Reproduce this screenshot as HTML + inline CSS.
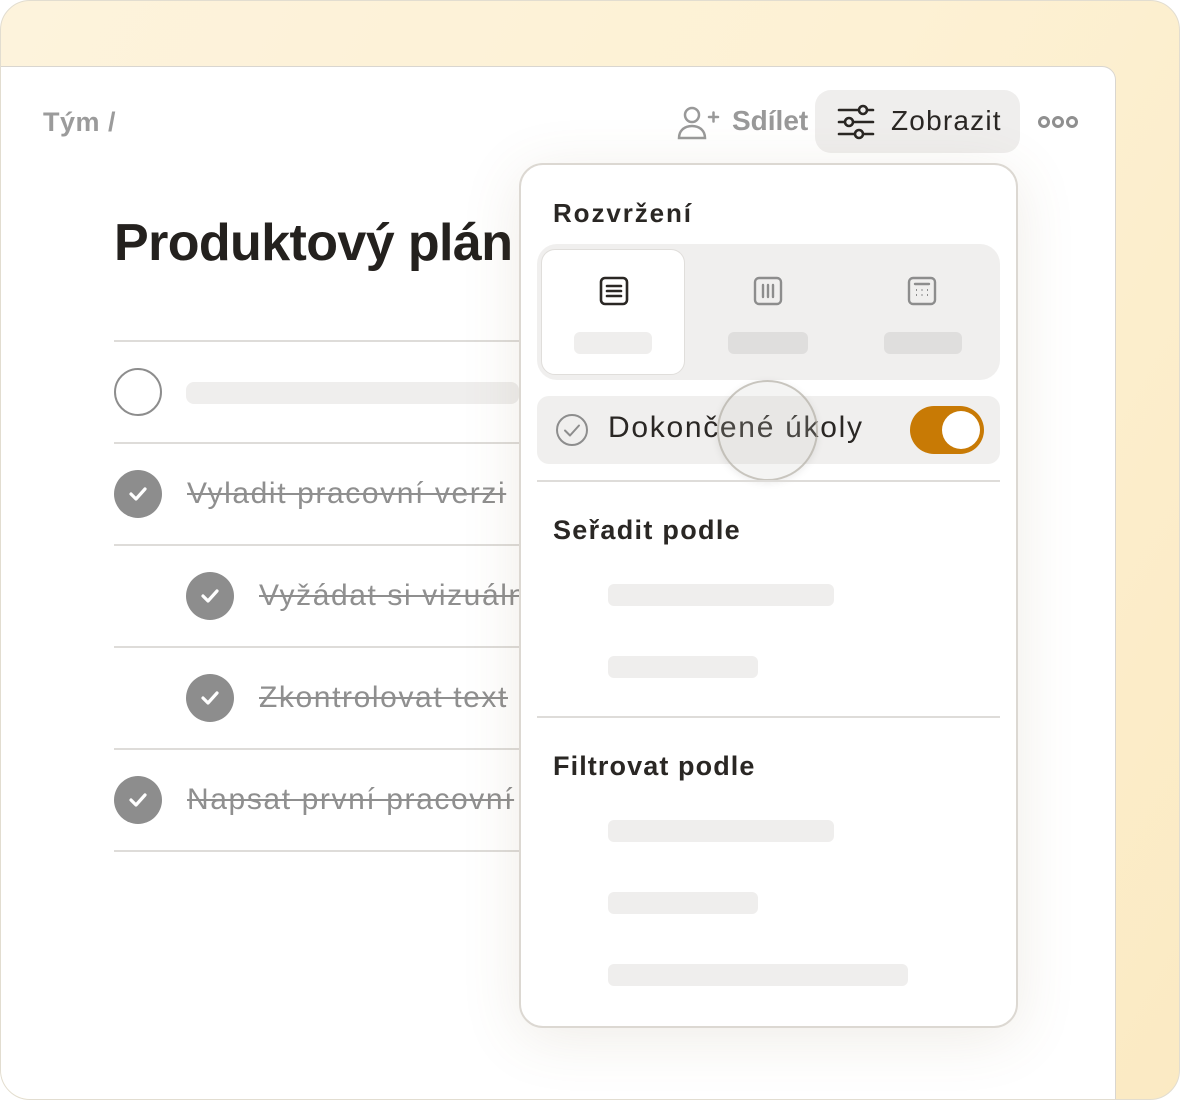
<!DOCTYPE html>
<html><head><meta charset="utf-8"><style>
*{margin:0;padding:0;box-sizing:border-box}
body{width:1180px;height:1100px;overflow:hidden;background:#fff;font-family:"Liberation Sans",sans-serif;position:relative}
.outer{position:absolute;left:0;top:0;width:1180px;height:1100px;border-radius:30px;border:1px solid #e2ddd0;background:linear-gradient(120deg,#fdf3dc 0%,#fdf1d4 50%,#fbeac3 100%);overflow:hidden}
.panel{position:absolute;left:-2px;top:65px;width:1117px;height:1040px;background:#fff;border:1px solid #d9d6d0;border-top-right-radius:14px}
.abs{position:absolute;white-space:nowrap}
.line{position:absolute;left:114px;width:405px;height:2px;background:#dedcd9}
.chk{position:absolute;width:48px;height:48px;border-radius:50%;background:#8d8d8d}
.chk svg{position:absolute;left:13px;top:14px}
.tt{position:absolute;font-size:30px;color:#8f8f8f;text-decoration:line-through;text-decoration-thickness:1.5px;white-space:nowrap;line-height:36px;letter-spacing:1.6px}
.pop{position:absolute;left:519px;top:163px;width:499px;height:865px;background:#fff;border:2px solid #dcd8d2;border-radius:24px;box-shadow:0 10px 60px rgba(120,100,60,.12)}
.h{position:absolute;font-size:27px;font-weight:bold;color:#2a2724;line-height:32px;letter-spacing:1.2px}
.bar{position:absolute;height:22px;background:#efeeed;border-radius:6px}
</style></head><body>
<div class="outer">
<div class="panel"></div>
</div>
<div class="abs" style="left:43px;top:106px;font-size:27px;font-weight:bold;color:#9b9b9b;line-height:32px;letter-spacing:.5px">Tým /</div>
<div class="abs" style="left:114px;top:212px;font-size:52px;font-weight:bold;color:#24211e;letter-spacing:-0.6px;line-height:62px">Produktový plán</div>

<svg class="abs" style="left:676px;top:105px" width="44" height="36" viewBox="0 0 44 36" fill="none" stroke="#999" stroke-width="2.5" stroke-linecap="round"><circle cx="16" cy="10" r="7"/><path d="M3 33c0-7 5-12 13-12s13 5 13 12z"/><path d="M33 12h9M37.5 7.5v9"/></svg>
<div class="abs" style="left:732px;top:104px;font-size:28px;color:#999;font-weight:bold;line-height:34px">Sdílet</div>
<div class="abs" style="left:815px;top:90px;width:205px;height:63px;background:#efeeed;border-radius:16px"></div>
<svg class="abs" style="left:837px;top:104px" width="38" height="36" viewBox="0 0 38 36" fill="none" stroke="#2a2724" stroke-width="2.6" stroke-linecap="round"><path d="M2 6h34M2 18h34M2 30h34"/><circle cx="26" cy="6" r="4" fill="#efeeed"/><circle cx="12" cy="18" r="4" fill="#efeeed"/><circle cx="22" cy="30" r="4" fill="#efeeed"/></svg>
<div class="abs" style="left:891px;top:104px;font-size:28px;color:#2a2724;line-height:34px;letter-spacing:1.2px">Zobrazit</div>
<svg class="abs" style="left:1037px;top:114px" width="42" height="16" viewBox="0 0 42 16" fill="none" stroke="#8f8f8f" stroke-width="3"><circle cx="7" cy="8" r="4.5"/><circle cx="21" cy="8" r="4.5"/><circle cx="35" cy="8" r="4.5"/></svg>

<div class="line" style="top:340px"></div>
<div class="line" style="top:442px"></div>
<div class="line" style="top:544px"></div>
<div class="line" style="top:646px"></div>
<div class="line" style="top:748px"></div>
<div class="line" style="top:850px"></div>

<div class="abs" style="left:114px;top:368px;width:48px;height:48px;border-radius:50%;border:2px solid #8d8d8d"></div>
<div class="bar" style="left:186px;top:382px;width:333px;height:22px;border-radius:8px"></div>

<div class="chk" style="left:114px;top:470px"><svg width="22" height="20" viewBox="0 0 22 20" fill="none" stroke="#fff" stroke-width="3.2" stroke-linecap="round" stroke-linejoin="round"><path d="M4 10l5 5 9-10"/></svg></div>
<div class="tt" style="left:187px;top:476px">Vyladit pracovní verzi</div>
<div class="chk" style="left:186px;top:572px"><svg width="22" height="20" viewBox="0 0 22 20" fill="none" stroke="#fff" stroke-width="3.2" stroke-linecap="round" stroke-linejoin="round"><path d="M4 10l5 5 9-10"/></svg></div>
<div class="tt" style="left:259px;top:578px;width:260px;overflow:hidden">Vyžádat si vizuální</div>
<div class="chk" style="left:186px;top:674px"><svg width="22" height="20" viewBox="0 0 22 20" fill="none" stroke="#fff" stroke-width="3.2" stroke-linecap="round" stroke-linejoin="round"><path d="M4 10l5 5 9-10"/></svg></div>
<div class="tt" style="left:259px;top:680px">Zkontrolovat text</div>
<div class="chk" style="left:114px;top:776px"><svg width="22" height="20" viewBox="0 0 22 20" fill="none" stroke="#fff" stroke-width="3.2" stroke-linecap="round" stroke-linejoin="round"><path d="M4 10l5 5 9-10"/></svg></div>
<div class="tt" style="left:187px;top:782px;width:332px;overflow:hidden">Napsat první pracovní</div>

<div class="pop"></div>
<div class="h" style="left:553px;top:197px;font-size:26px;letter-spacing:1.9px">Rozvržení</div>
<div class="abs" style="left:537px;top:244px;width:463px;height:136px;background:#f0efee;border-radius:20px"></div>
<div class="abs" style="left:541px;top:249px;width:144px;height:126px;background:#fff;border:1px solid #e0dedb;border-radius:14px"></div>
<svg class="abs" style="left:599px;top:276px" width="30" height="30" viewBox="0 0 30 30" fill="none" stroke="#2a2724" stroke-width="2.6"><rect x="2" y="2" width="26" height="26" rx="4"/><path d="M8 10h14M8 15h14M8 20h14" stroke-linecap="round"/></svg>
<svg class="abs" style="left:753px;top:276px" width="30" height="30" viewBox="0 0 30 30" fill="none" stroke="#8d8d8d" stroke-width="2.4"><rect x="2" y="2" width="26" height="26" rx="4"/><path d="M10 9v12M15 9v12M20 9v12" stroke-linecap="round"/></svg>
<svg class="abs" style="left:907px;top:276px" width="30" height="30" viewBox="0 0 30 30" fill="none" stroke="#8d8d8d" stroke-width="2.4"><rect x="2" y="2" width="26" height="26" rx="4"/><path d="M8 8h14" stroke-linecap="round"/><path d="M9 14h1M14.5 14h1M20 14h1M9 19h1M14.5 19h1M20 19h1" stroke-width="2"/></svg>
<div class="bar" style="left:574px;top:332px;width:78px;background:#efeeed"></div>
<div class="bar" style="left:728px;top:332px;width:80px;background:#dfdedd"></div>
<div class="bar" style="left:884px;top:332px;width:78px;background:#dfdedd"></div>

<div class="abs" style="left:537px;top:396px;width:463px;height:68px;background:#f0efee;border-radius:12px"></div>
<svg class="abs" style="left:555px;top:413px" width="34" height="34" viewBox="0 0 34 34" fill="none" stroke="#8d8d8d" stroke-width="2"><circle cx="17" cy="17" r="15"/><path d="M10 17.5l5 5 9-10" stroke-linecap="round" stroke-linejoin="round"/></svg>
<div class="abs" style="left:608px;top:410px;font-size:30px;color:#2a2724;line-height:36px;letter-spacing:1.7px">Dokončené úkoly</div>
<div class="abs" style="left:910px;top:406px;width:74px;height:48px;background:#c87a05;border-radius:24px"></div>
<div class="abs" style="left:942px;top:411px;width:38px;height:38px;background:#fff;border-radius:50%"></div>
<div class="abs" style="left:717px;top:380px;width:101px;height:101px;border-radius:50%;border:2px solid rgba(170,165,155,.6);background:rgba(200,198,194,.2);box-shadow:0 2px 8px rgba(0,0,0,.08)"></div>

<div class="abs" style="left:537px;top:480px;width:463px;height:2px;background:#dedcd9"></div>
<div class="h" style="left:553px;top:514px;letter-spacing:1.3px">Seřadit podle</div>
<div class="bar" style="left:608px;top:584px;width:226px"></div>
<div class="bar" style="left:608px;top:656px;width:150px"></div>
<div class="abs" style="left:537px;top:716px;width:463px;height:2px;background:#dedcd9"></div>
<div class="h" style="left:553px;top:750px;letter-spacing:1.1px">Filtrovat podle</div>
<div class="bar" style="left:608px;top:820px;width:226px"></div>
<div class="bar" style="left:608px;top:892px;width:150px"></div>
<div class="bar" style="left:608px;top:964px;width:300px"></div>
</body></html>
